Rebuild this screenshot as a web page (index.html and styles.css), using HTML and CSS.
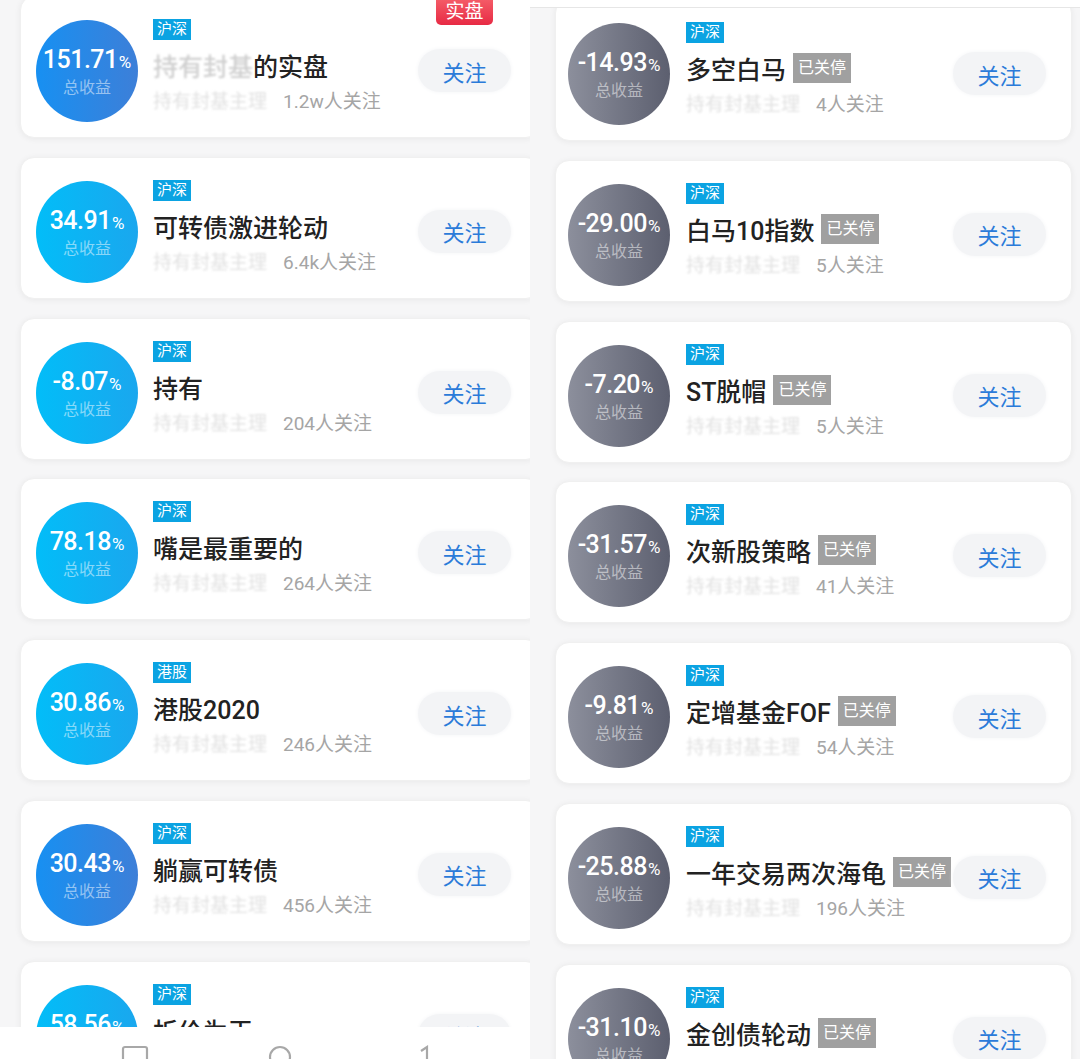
FILE: index.html
```html
<!DOCTYPE html>
<html lang="zh-CN">
<head>
    <meta charset="UTF-8">
    <meta name="viewport" content="width=device-width, initial-scale=1.0">
    <title>组合列表</title>
    <link rel="stylesheet" href="styles.css">
</head>
<body>
    <div class="screens">
        <!-- Left screen -->
        <section class="screen screen-left">
            <div class="list">
                <div class="card">
                    <div class="ring ring-blue"><div class="rate">151.71<small>%</small></div><div class="rate-label">总收益</div></div>
                    <div class="info">
                        <span class="tag">沪深</span>
                        <div class="title"><span class="mask">持有封基</span>的实盘</div>
                        <div class="meta"><span class="mask">持有封基主理</span>1.2w人关注</div>
                    </div>
                    <button class="follow">关注</button>
                    <span class="live">实盘</span>
                </div>
                <div class="card">
                    <div class="ring ring-cyan"><div class="rate">34.91<small>%</small></div><div class="rate-label">总收益</div></div>
                    <div class="info">
                        <span class="tag">沪深</span>
                        <div class="title">可转债激进轮动</div>
                        <div class="meta"><span class="mask">持有封基主理</span>6.4k人关注</div>
                    </div>
                    <button class="follow">关注</button>
                </div>
                <div class="card">
                    <div class="ring ring-cyan"><div class="rate">-8.07<small>%</small></div><div class="rate-label">总收益</div></div>
                    <div class="info">
                        <span class="tag">沪深</span>
                        <div class="title">持有</div>
                        <div class="meta"><span class="mask">持有封基主理</span>204人关注</div>
                    </div>
                    <button class="follow">关注</button>
                </div>
                <div class="card">
                    <div class="ring ring-cyan"><div class="rate">78.18<small>%</small></div><div class="rate-label">总收益</div></div>
                    <div class="info">
                        <span class="tag">沪深</span>
                        <div class="title">嘴是最重要的</div>
                        <div class="meta"><span class="mask">持有封基主理</span>264人关注</div>
                    </div>
                    <button class="follow">关注</button>
                </div>
                <div class="card">
                    <div class="ring ring-cyan"><div class="rate">30.86<small>%</small></div><div class="rate-label">总收益</div></div>
                    <div class="info">
                        <span class="tag">港股</span>
                        <div class="title">港股2020</div>
                        <div class="meta"><span class="mask">持有封基主理</span>246人关注</div>
                    </div>
                    <button class="follow">关注</button>
                </div>
                <div class="card">
                    <div class="ring ring-blue"><div class="rate">30.43<small>%</small></div><div class="rate-label">总收益</div></div>
                    <div class="info">
                        <span class="tag">沪深</span>
                        <div class="title">躺赢可转债</div>
                        <div class="meta"><span class="mask">持有封基主理</span>456人关注</div>
                    </div>
                    <button class="follow">关注</button>
                </div>
                <div class="card">
                    <div class="ring ring-cyan"><div class="rate">58.56<small>%</small></div><div class="rate-label">总收益</div></div>
                    <div class="info">
                        <span class="tag">沪深</span>
                        <div class="title">折价为王</div>
                    </div>
                    <button class="follow">关注</button>
                </div>
            </div>

            <!-- Bottom tab bar (cut off) -->
            <nav class="tabbar">
                <span class="tab"><svg width="28" height="24" viewBox="0 0 28 24"><rect x="2" y="2" width="24" height="20" rx="2" fill="none" stroke="#a8a8a8" stroke-width="2.2"/></svg></span>
                <span class="tab"><svg width="24" height="24" viewBox="0 0 24 24"><circle cx="12" cy="12" r="10" fill="none" stroke="#a8a8a8" stroke-width="2.2"/></svg></span>
                <span class="tab"><svg width="16" height="24" viewBox="0 0 16 24"><path d="M4 6 L10 2 L10 22" fill="none" stroke="#a8a8a8" stroke-width="2.2"/></svg></span>
            </nav>
        </section>

        <!-- Right screen -->
        <section class="screen screen-right">
            <div class="topline"></div>
            <div class="list">
                <div class="card">
                    <div class="ring ring-gray"><div class="rate">-14.93<small>%</small></div><div class="rate-label">总收益</div></div>
                    <div class="info">
                        <span class="tag">沪深</span>
                        <div class="title">多空白马<span class="closed">已关停</span></div>
                        <div class="meta"><span class="mask">持有封基主理</span>4人关注</div>
                    </div>
                    <button class="follow">关注</button>
                </div>
                <div class="card">
                    <div class="ring ring-gray"><div class="rate">-29.00<small>%</small></div><div class="rate-label">总收益</div></div>
                    <div class="info">
                        <span class="tag">沪深</span>
                        <div class="title">白马10指数<span class="closed">已关停</span></div>
                        <div class="meta"><span class="mask">持有封基主理</span>5人关注</div>
                    </div>
                    <button class="follow">关注</button>
                </div>
                <div class="card">
                    <div class="ring ring-gray"><div class="rate">-7.20<small>%</small></div><div class="rate-label">总收益</div></div>
                    <div class="info">
                        <span class="tag">沪深</span>
                        <div class="title">ST脱帽<span class="closed">已关停</span></div>
                        <div class="meta"><span class="mask">持有封基主理</span>5人关注</div>
                    </div>
                    <button class="follow">关注</button>
                </div>
                <div class="card">
                    <div class="ring ring-gray"><div class="rate">-31.57<small>%</small></div><div class="rate-label">总收益</div></div>
                    <div class="info">
                        <span class="tag">沪深</span>
                        <div class="title">次新股策略<span class="closed">已关停</span></div>
                        <div class="meta"><span class="mask">持有封基主理</span>41人关注</div>
                    </div>
                    <button class="follow">关注</button>
                </div>
                <div class="card">
                    <div class="ring ring-gray"><div class="rate">-9.81<small>%</small></div><div class="rate-label">总收益</div></div>
                    <div class="info">
                        <span class="tag">沪深</span>
                        <div class="title">定增基金FOF<span class="closed">已关停</span></div>
                        <div class="meta"><span class="mask">持有封基主理</span>54人关注</div>
                    </div>
                    <button class="follow">关注</button>
                </div>
                <div class="card">
                    <div class="ring ring-gray"><div class="rate">-25.88<small>%</small></div><div class="rate-label">总收益</div></div>
                    <div class="info">
                        <span class="tag">沪深</span>
                        <div class="title">一年交易两次海龟<span class="closed">已关停</span></div>
                        <div class="meta"><span class="mask">持有封基主理</span>196人关注</div>
                    </div>
                    <button class="follow">关注</button>
                </div>
                <div class="card">
                    <div class="ring ring-gray"><div class="rate">-31.10<small>%</small></div><div class="rate-label">总收益</div></div>
                    <div class="info">
                        <span class="tag">沪深</span>
                        <div class="title">金创债轮动<span class="closed">已关停</span></div>
                    </div>
                    <button class="follow">关注</button>
                </div>
            </div>
        </section>
    </div>
</body>
</html>
```

FILE: styles.css
```css
/* General Styles */
body {
    margin: 0;
    background-color: #f6f6f7;
    font-family: Roboto, "Noto Sans CJK SC", sans-serif;
    color: #222;
    overflow: hidden;
}

.screens {
    display: flex;
    width: 1080px;
    height: 1059px;
    overflow: hidden;
}

.screen {
    position: relative;
    height: 1059px;
    overflow: hidden;
}

.screen-left {
    width: 530px;
}

.screen-right {
    width: 550px;
}

.list {
    display: flex;
    flex-direction: column;
    gap: 18.8px;
}

.screen-left .list {
    margin-top: -4px;
    padding-left: 20px;
}

.screen-right .list {
    margin-top: -1px;
    padding-left: 25px;
}

/* Card */
.card {
    position: relative;
    display: flex;
    align-items: flex-start;
    flex: none;
    box-sizing: border-box;
    height: 142px;
    padding: 22px 0 0 15px;
    background-color: #fff;
    border: 1px solid #f0f0f0;
    border-radius: 14px;
    box-shadow: 0 1px 6px rgba(0, 0, 0, 0.06);
}

.screen-left .card {
    width: 520px;
}

.screen-right .card {
    width: 517px;
    padding-left: 12px;
}

/* Return circle */
.ring {
    flex: none;
    display: flex;
    flex-direction: column;
    align-items: center;
    justify-content: center;
    box-sizing: border-box;
    width: 102px;
    height: 102px;
    margin-top: 1px;
    padding-top: 2px;
    border-radius: 50%;
    color: #fff;
}

.ring-blue {
    background: linear-gradient(90deg, #1790f2, #3d7fd8);
}

.ring-cyan {
    background: linear-gradient(90deg, #02bdf8, #1aa7ee);
}

.ring-gray {
    background: linear-gradient(90deg, #8c8f9c, #5c5f6f);
}

.rate {
    font-size: 25px;
    font-weight: 500;
    line-height: 28px;
    letter-spacing: -0.5px;
    white-space: nowrap;
}

.rate small {
    font-size: 17px;
    font-weight: 400;
    letter-spacing: 0;
    margin-left: 1px;
}

.rate-label {
    margin-top: 2px;
    font-size: 16px;
    line-height: 20px;
    color: rgba(255, 255, 255, 0.5);
}

/* Info column */
.info {
    flex: 1;
    min-width: 0;
    margin-left: 15px;
}

.screen-right .info {
    margin-left: 16px;
}

.tag {
    display: inline-block;
    height: 21px;
    padding: 0 4px;
    background-color: #0ba3e2;
    color: #fff;
    font-size: 15px;
    line-height: 21px;
    vertical-align: top;
}

.title {
    display: flex;
    align-items: center;
    height: 32px;
    margin-top: 9px;
    font-size: 25px;
    font-weight: 500;
    white-space: nowrap;
}

.closed {
    display: inline-block;
    height: 30px;
    margin-left: 7px;
    padding: 0 5px;
    background-color: #a0a0a0;
    color: #fff;
    font-size: 16px;
    font-weight: 400;
    line-height: 30px;
}

.meta {
    margin-top: 11px;
    font-size: 19px;
    line-height: 20px;
    color: #a5a5a5;
    white-space: nowrap;
}

/* Blurred owner names */
.mask {
    color: #e2e2e2;
    filter: blur(0.9px);
}

.meta .mask {
    display: inline-block;
    margin-right: 16px;
}

.title .mask {
    color: #cfcfcf;
    filter: blur(1.2px);
}

/* Follow button */
.follow {
    flex: none;
    width: 93px;
    height: 43px;
    margin-top: 30px;
    margin-right: 28px;
    border: none;
    border-radius: 22px;
    background-color: #f3f4f6;
    box-shadow: 0 0 4px #f3f4f6;
    color: #2b7bd9;
    font-family: "Noto Sans CJK SC", sans-serif;
    font-size: 22px;
    cursor: pointer;
}

.screen-right .follow {
    margin-right: 25px;
}

/* Live badge */
.live {
    position: absolute;
    top: 0;
    right: 46px;
    width: 57px;
    height: 28px;
    border-radius: 0 0 5px 5px;
    background: linear-gradient(180deg, #f5606a, #e72a44);
    color: #fff;
    font-size: 19px;
    line-height: 30px;
    text-align: center;
}

/* Top line on right screen */
.topline {
    position: absolute;
    top: 0;
    left: 0;
    right: 0;
    height: 7px;
    background-color: #fff;
    border-bottom: 1px solid #e6e6e6;
    z-index: 2;
}

/* Bottom tab bar */
.tabbar {
    position: absolute;
    left: 0;
    right: 0;
    top: 1027px;
    bottom: 0;
    display: flex;
    padding-left: 62px;
    background-color: #fff;
}

.tab {
    display: flex;
    justify-content: center;
    width: 145px;
    padding-top: 18px;
}
```
